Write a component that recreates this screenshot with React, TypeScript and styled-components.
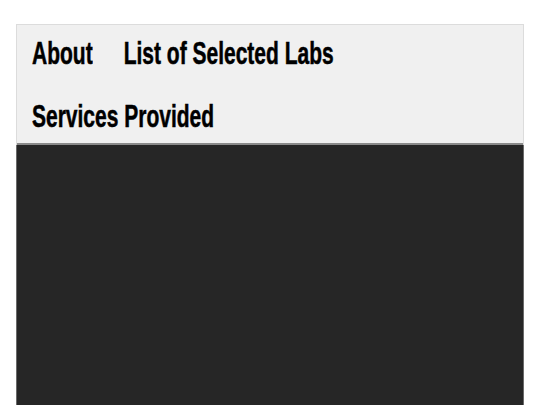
import React from 'react';
import styled, { createGlobalStyle } from 'styled-components';

const GlobalStyle = createGlobalStyle`
  html, body {
    margin: 0;
    padding: 0;
    background: #ffffff;
  }
  body {
    font-family: "Liberation Sans", Arial, sans-serif;
  }
`;

const Page = styled.div`
  padding: 24px 16px 0 16px;
  height: 405px;
  box-sizing: border-box;
  overflow: hidden;
`;

const Frame = styled.div`
  display: flex;
  flex-direction: column;
  height: 100%;
  border: 1px solid #dcdcdc;
  border-bottom: none;
  box-sizing: border-box;
`;

const Nav = styled.nav`
  display: flex;
  flex-wrap: wrap;
  column-gap: 31px;
  row-gap: 19px;
  padding: 7px 15px 4px 15px;
  background: #f0f0f0;
  border-bottom: 2px solid #8a8a8a;
`;

// condensed look: narrow glyph width, tall caps
const NavLink = styled.a`
  display: inline-block;
  height: 44px;
  line-height: 44px;
  font-size: 21px;
  font-weight: 700;
  color: #000;
  -webkit-text-stroke: 0.35px #000;
  text-decoration: none;
  white-space: nowrap;
  transform: scaleY(1.47);
  cursor: pointer;
`;

const Stage = styled.div`
  flex: 1;
  background: #262626;
  margin: 0 -1px;
  border-left: 1px solid #6a6a6a;
  border-right: 1px solid #6a6a6a;
`;

export default function App() {
  const links = ['About', 'List of Selected Labs', 'Services Provided'];
  return (
    <>
      <GlobalStyle />
      <Page>
        <Frame>
          <Nav>
            {links.map((l) => (
              <NavLink key={l}>{l}</NavLink>
            ))}
          </Nav>
          <Stage />
        </Frame>
      </Page>
    </>
  );
}
